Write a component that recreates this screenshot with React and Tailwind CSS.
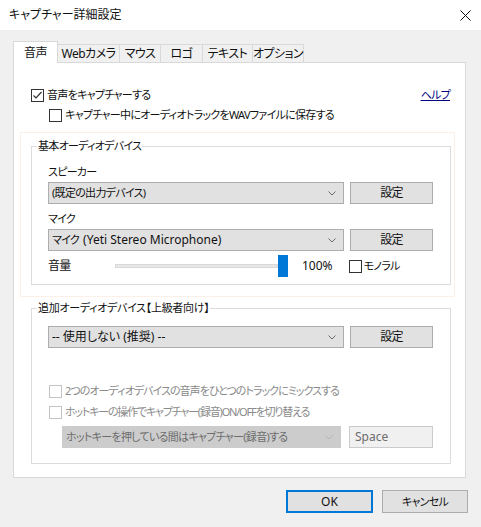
import React from "react";

const Check = ({ checked, disabled }) => (
  <span
    className={
      disabled
        ? "w-[13px] h-[13px] border border-[#c4c4c4] bg-white flex items-center justify-center shrink-0"
        : "w-[13px] h-[13px] border border-[#333333] bg-white flex items-center justify-center shrink-0"
    }
  >
    {checked && (
      <svg width="11" height="11" viewBox="0 0 11 11">
        <path d="M1.5 5.5 L4 8 L9.5 2" fill="none" stroke="#333333" strokeWidth="1.2" />
      </svg>
    )}
  </span>
);

const Chevron = ({ disabled }) => (
  <svg width="8" height="5" viewBox="0 0 8 5" className="shrink-0">
    <path d="M0.5 0.5 L4 4 L7.5 0.5" fill="none" stroke={disabled ? "#b5b5b5" : "#6a6a6a"} strokeWidth="1" />
  </svg>
);

const Select = ({ children, w, disabled }) => (
  <div
    className={
      (disabled
        ? "bg-[#cccccc] border-[#cccccc] text-[#6d6d6d] "
        : "bg-[#e1e1e1] border-[#adadad] ") +
      w +
      " h-[22px] border flex items-center pl-[3px] pr-[7px]"
    }
  >
    <span className="flex-1 whitespace-pre overflow-hidden">{children}</span>
    <Chevron disabled={disabled} />
  </div>
);

const Btn = ({ children }) => (
  <div className="h-[22px] w-[83px] bg-[#e1e1e1] border border-[#adadad] flex items-center justify-center text-[12px]">
    {children}
  </div>
);

const Tab = ({ label, w, active, first }) => (
  <div
    className={
      (active
        ? "h-[22px] bg-white -mb-px relative z-10 "
        : "h-[18px] bg-[#f0f0f0] ") +
      (first ? "" : "-ml-px ") +
      w +
      " border border-b-0 border-[#d9d9d9] flex items-center justify-center whitespace-nowrap"
    }
  >
    {label}
  </div>
);

export default function App() {
  return (
    <div className="w-[481px] h-[527px] bg-[#f0f0f0] font-['Noto_Sans','Noto_Sans_CJK_JP',sans-serif] text-[11px] tracking-[-0.7px] leading-[16px] text-[#111111] flex flex-col overflow-hidden [font-feature-settings:'palt']">
      <div className="h-[30px] bg-white flex items-center justify-between pl-[9px] pr-[10px] shrink-0">
        <span className="text-[12px] tracking-normal">キャプチャー詳細設定</span>
        <svg width="11" height="11" viewBox="0 0 11 11">
          <path d="M0.5 0.5 L10.5 10.5 M10.5 0.5 L0.5 10.5" stroke="#111111" strokeWidth="1" />
        </svg>
      </div>

      <div className="pl-[13px] pt-[11px] flex flex-col">
        <div className="flex items-end h-[21px] text-[12px] tracking-[-0.5px]">
          <Tab label="音声" w="w-[45px]" active first />
          <Tab label="Webカメラ" w="w-[63px]" />
          <Tab label="マウス" w="w-[42px]" />
          <Tab label="ロゴ" w="w-[43px]" />
          <Tab label="テキスト" w="w-[51px]" />
          <Tab label="オプション" w="w-[52px]" />
        </div>

        <div className="w-[453px] h-[416px] border border-[#d9d9d9] bg-white flex flex-col">
          <div className="mt-[24px] h-[16px] flex items-center pl-[17px] pr-[15px]">
            <Check checked />
            <span className="ml-[3px]">音声をキャプチャーする</span>
            <span className="ml-auto underline text-[#000080]">ヘルプ</span>
          </div>
          <div className="mt-[4px] h-[16px] flex items-center pl-[35px]">
            <Check />
            <span className="ml-[3px]">キャプチャー中にオーディオトラックをWAVファイルに保存する</span>
          </div>

          <div className="mt-[9px] ml-[6px] w-[435px] h-[165px] border border-[#fbefe6] flex flex-col">
            <div className="mt-[13px] ml-[10px] w-[420px] h-[139px] border border-[#dcdcdc] relative flex flex-col pl-[16px] pt-[17px]">
              <span className="absolute -top-[9px] left-[5px] bg-white px-[1px]">基本オーディオデバイス</span>
              <div className="h-[16px] flex items-center">スピーカー</div>
              <div className="mt-[2px] flex gap-[6px]">
                <Select w="w-[296px]">(既定の出力デバイス)</Select>
                <Btn>設定</Btn>
              </div>
              <div className="mt-[7px] h-[16px] flex items-center">マイク</div>
              <div className="mt-[2px] flex gap-[6px]">
                <Select w="w-[296px]">
                  マイク<span className="ml-[4px] text-[12px] tracking-normal">(Yeti Stereo Microphone)</span>
                </Select>
                <Btn>設定</Btn>
              </div>
              <div className="mt-[4px] h-[22px] flex items-center">
                <span className="w-[67px] text-[12px]">音量</span>
                <div className="w-[173px] h-[22px] flex items-center">
                  <div className="w-[163px] h-[4px] bg-[#e7e7e7] border border-[#d9d9d9]" />
                  <div className="w-[10px] h-[22px] bg-[#0078d7]" />
                </div>
                <span className="ml-[14px] text-[12px] tracking-normal">100%</span>
                <span className="ml-[16px] flex items-center">
                  <Check />
                  <span className="ml-[2px]">モノラル</span>
                </span>
              </div>
            </div>
          </div>

          <div className="mt-[11px] ml-[17px] w-[420px] h-[156px] border border-[#dcdcdc] relative flex flex-col pt-[17px]">
            <span className="absolute -top-[9px] left-[5px] bg-white px-[1px] tracking-[-0.3px]">追加オーディオデバイス【上級者向け】</span>
            <div className="ml-[16px] flex gap-[6px]">
              <Select w="w-[296px]">
                <span className="text-[12px] tracking-normal">-- 使用しない (推奨) --</span>
              </Select>
              <Btn>設定</Btn>
            </div>
            <div className="mt-[35px] ml-[17px] h-[16px] flex items-center text-[#8a8a8a]">
              <Check disabled />
              <span className="ml-[3px] tracking-[-0.95px]">2つのオーディオデバイスの音声をひとつのトラックにミックスする</span>
            </div>
            <div className="mt-[5px] ml-[17px] h-[16px] flex items-center text-[#8a8a8a]">
              <Check disabled />
              <span className="ml-[3px] tracking-[-1.2px]">ホットキーの操作でキャプチャー(録音)ON/OFFを切り替える</span>
            </div>
            <div className="mt-[6px] ml-[30px] flex gap-[8px]">
              <Select w="w-[279px]" disabled>ホットキーを押している間はキャプチャー(録音)する</Select>
              <div className="w-[84px] h-[22px] bg-[#f0f0f0] border border-[#cccccc] text-[#6d6d6d] text-[12px] tracking-normal flex items-center pl-[5px]">
                Space
              </div>
            </div>
          </div>
        </div>
      </div>

      <div className="mt-[12px] flex justify-end gap-[9px] pr-[13px]">
        <div className="w-[87px] h-[23px] bg-[#e1e1e1] border-2 border-[#0078d7] flex items-center justify-center text-[12px] tracking-normal">OK</div>
        <div className="w-[86px] h-[23px] bg-[#e1e1e1] border border-[#adadad] flex items-center justify-center">キャンセル</div>
      </div>
    </div>
  );
}
